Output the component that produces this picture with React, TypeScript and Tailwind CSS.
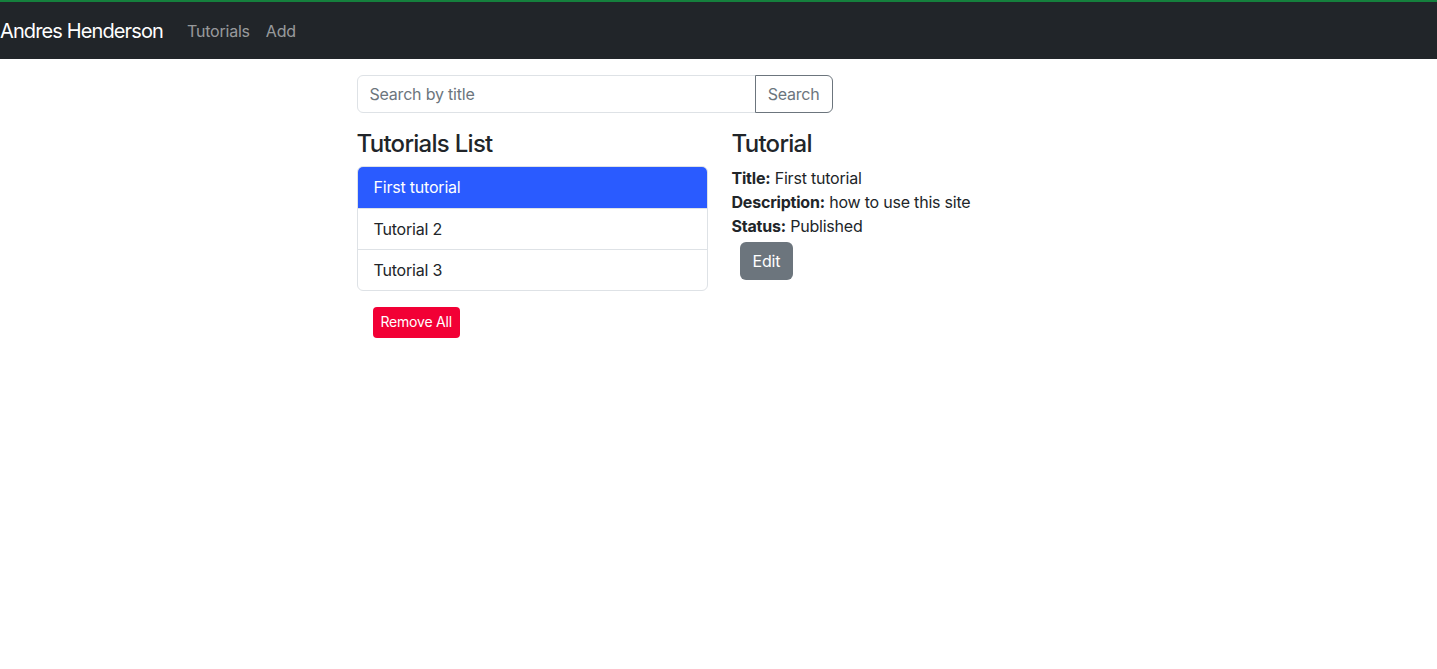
import React from 'react';

const tutorials = ['First tutorial', 'Tutorial 2', 'Tutorial 3'];

export default function App() {
  const current = 0;
  return (
    <div className="min-h-screen bg-white text-[#212529] font-['Inter','Liberation_Sans',sans-serif] text-base tracking-[-0.013em]">
      {/* top navbar */}
      <nav className="h-[59px] bg-[#212529] border-t-2 border-[#15803d] flex items-center">
        <a className="text-[20px] text-white mr-4 leading-[30px] tracking-[-0.044em]">Andres Henderson</a>
        <div className="flex">
          <a className="px-2 text-[#ffffff8c]">Tutorials</a>
          <a className="px-2 text-[#ffffff8c]">Add</a>
        </div>
      </nav>

      <div className="mx-auto w-[752px] mt-4 pl-[2px]">
        <div className="flex">
          <div className="w-2/3 px-3">
            <div className="flex mb-4">
              <input
                className="flex-1 h-[38px] border border-[#dee2e6] rounded-l-md px-3 text-base placeholder:text-[#6c757d] outline-none"
                placeholder="Search by title"
              />
              <button className="h-[38px] px-3 -ml-px border border-[#6c757d] text-[#6c757d] rounded-r-md">
                Search
              </button>
            </div>
          </div>
        </div>

        <div className="flex">
          {/* left column */}
          <div className="w-1/2 px-3">
            <h4 className="text-2xl font-medium leading-[1.2] mb-2 mt-px tracking-[-0.03em]">Tutorials List</h4>
            <ul className="border border-[#dee2e6] rounded-md overflow-hidden -mt-px">
              {tutorials.map((t, i) => (
                <li
                  key={t}
                  className={
                    i === current
                      ? 'h-[41px] px-4 flex items-center bg-[#2a5bff] text-white'
                      : 'h-[41px] px-4 flex items-center border-t border-[#dee2e6]'
                  }
                >
                  {t}
                </li>
              ))}
            </ul>
            <button className="m-4 h-[31px] px-2 text-sm rounded bg-[#f20035] text-white">Remove All</button>
          </div>

          {/* right column */}
          <div className="w-1/2 px-3">
            <h4 className="text-2xl font-medium leading-[1.2] mb-2 mt-px tracking-[-0.03em]">Tutorial</h4>
            <div className="leading-6 -mt-px">
              <div><strong className="font-bold">Title:</strong> First tutorial</div>
              <div><strong className="font-bold">Description:</strong> how to use this site</div>
              <div><strong className="font-bold">Status:</strong> Published</div>
            </div>
            <button className="ml-2 mt-1 h-[38px] px-[13px] rounded-md bg-[#6c757d] text-white">Edit</button>
          </div>
        </div>
      </div>
    </div>
  );
}
